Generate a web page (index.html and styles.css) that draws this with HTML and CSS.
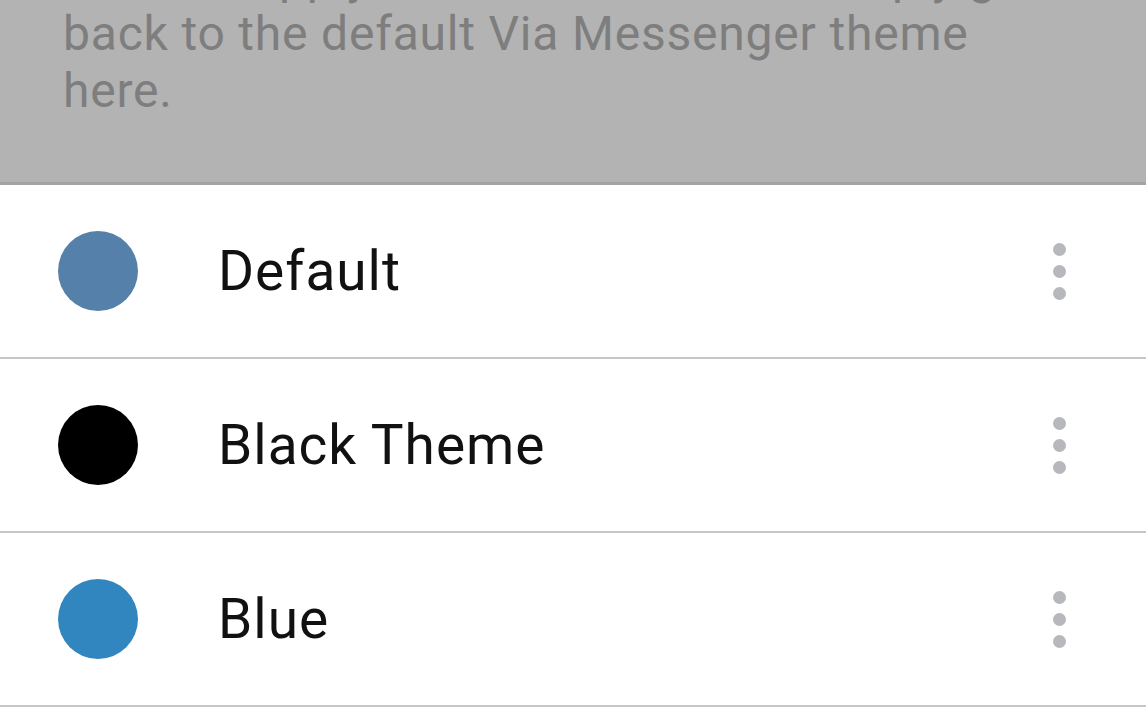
FILE: index.html
```html
<!DOCTYPE html>
<html>
<head>
<meta charset="utf-8">
<link rel="stylesheet" href="styles.css">
</head>
<body>
<div class="intro">
  <p class="intro-text">You can apply a custom theme or simply go<br>back to the default Via Messenger theme<br>here.</p>
</div>
<ul class="themes">
  <li class="theme">
    <span class="swatch swatch-default"></span>
    <span class="name">Default</span>
    <span class="more"><i></i><i></i><i></i></span>
  </li>
  <li class="theme">
    <span class="swatch swatch-black"></span>
    <span class="name">Black Theme</span>
    <span class="more"><i></i><i></i><i></i></span>
  </li>
  <li class="theme">
    <span class="swatch swatch-blue"></span>
    <span class="name">Blue</span>
    <span class="more"><i></i><i></i><i></i></span>
  </li>
</ul>
</body>
</html>
```

FILE: styles.css
```css
html, body {
  margin: 0;
  padding: 0;
  background: #ffffff;
  font-family: Roboto, "Noto Sans", "Liberation Sans", sans-serif;
}

.intro {
  background: #b3b3b3;
  height: 182px;
  border-bottom: 3px solid #a4a4a4;
  overflow: hidden;
  padding: 0 40px 0 63px;
}

.intro-text {
  margin: -52px 0 0 0;
  white-space: nowrap;
  font-size: 48px;
  line-height: 57px;
  letter-spacing: 0.8px;
  color: #7e7e7e;
}

.themes {
  list-style: none;
  margin: 0;
  padding: 0;
}

.theme {
  display: flex;
  align-items: center;
  height: 172px;
  border-bottom: 2px solid #c6c6c6;
  padding: 0 80px 0 58px;
}

.swatch {
  width: 80px;
  height: 80px;
  border-radius: 50%;
  flex: none;
}

.swatch-default { background: #5580a9; }
.swatch-black { background: #000000; }
.swatch-blue { background: #3186bf; }

.name {
  flex: 1;
  margin-left: 80px;
  font-size: 55px;
  letter-spacing: 1px;
  color: #111111;
}

.more {
  display: flex;
  flex-direction: column;
  gap: 9px;
}

.more i {
  display: block;
  width: 13px;
  height: 13px;
  border-radius: 50%;
  background: #b6b8bc;
}
```
